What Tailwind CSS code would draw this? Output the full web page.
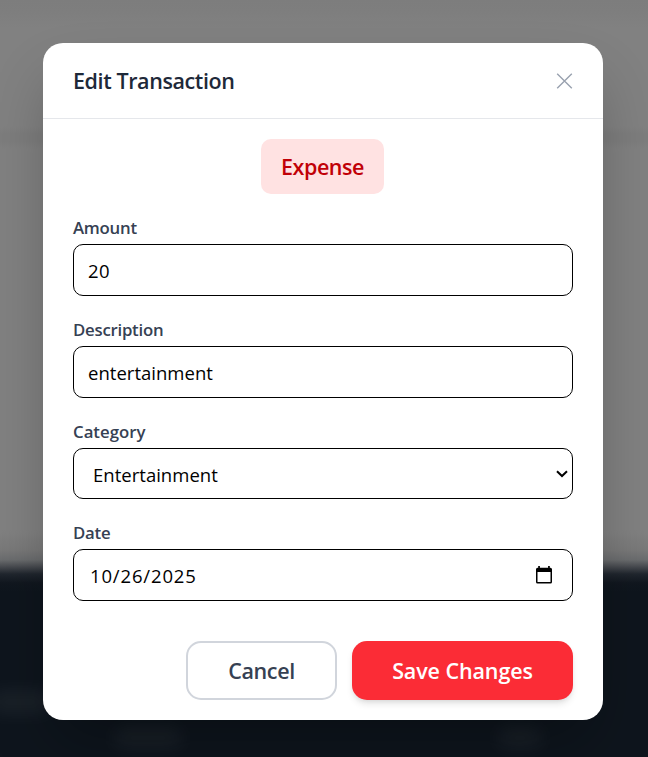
<!DOCTYPE html>
<html lang="en">
<head>
<meta charset="utf-8">
<title>Edit Transaction</title>
<script src="https://cdn.jsdelivr.net/npm/@tailwindcss/browser@4"></script>
</head>
<body class="relative h-[757px] w-[648px] overflow-hidden bg-[#818181] font-['Open_Sans','Noto_Sans',sans-serif]">
  <!-- Blurred page behind the dialog -->
  <div class="absolute inset-0 bg-[linear-gradient(to_bottom,#7d7d7d_0px,#7e7e7e_12px,#818181_28px,#818181_126px,#7d7d7d_133px,#7d7d7d_141px,#818181_150px,#818181_530px,#797979_550px,#6a6c6e_560px,#46494e_567px,#20262e_574px,#11171f_583px,#0e151d_592px,#0e151d_757px)]"></div>
  <div class="absolute top-[690px] -left-3 h-6 w-16 rounded-full bg-white/5 blur-[9px]"></div>
  <div class="absolute top-[728px] left-[113px] h-5 w-[70px] rounded-full bg-white/5 blur-[9px]"></div>
  <div class="absolute top-[728px] left-[497px] h-5 w-[46px] rounded-full bg-white/5 blur-[9px]"></div>

  <div class="relative flex h-full w-full items-start justify-center pt-[43px] pr-[2px]">
    <div role="dialog" class="flex h-[677px] w-[560px] flex-col rounded-[20px] bg-white shadow-[0_31px_62px_-12px_rgba(0,0,0,0.3)]">
      <header class="flex h-[76px] items-center justify-between border-b border-[#e5e7eb] px-[30px]">
        <h2 class="text-[21.5px] leading-[35px] font-semibold tracking-[-0.4px] whitespace-nowrap text-[#1e2939]">Edit Transaction</h2>
        <button aria-label="Close" class="flex h-[17px] w-[17px] items-center justify-center">
          <svg class="size-[17px]" viewBox="0 0 17 17" fill="none" stroke="#99a1af" stroke-width="1.4"><path d="M1.2 1.7 15.8 16.3M15.8 1.7 1.2 16.3"/></svg>
        </button>
      </header>

      <div class="flex flex-col gap-5 px-[30px] pt-5">
        <div class="flex justify-center pr-px">
          <span class="flex h-[55px] w-[123px] items-center justify-center rounded-[10px] bg-[#ffe2e2] pt-[2px] text-[21.5px] font-semibold tracking-[-0.45px] text-[#c10007]">Expense</span>
        </div>
        <div class="flex flex-col gap-[5px]">
          <span class="h-[25px] text-[16.8px] leading-[27px] font-semibold tracking-[-0.25px] text-[#364153]">Amount</span>
          <div class="flex h-[52px] items-center rounded-[10px] border border-black px-[14px] pt-[2px] text-[18.5px] text-black"><span class="tracking-[0.5px]">20</span></div>
        </div>
        <div class="flex flex-col gap-[5px]">
          <span class="h-[25px] text-[16.8px] leading-[27px] font-semibold tracking-[-0.25px] text-[#364153]">Description</span>
          <div class="flex h-[52px] items-center rounded-[10px] border border-black px-[14px] pt-[2px] text-[18.5px] text-black"><span class="tracking-[0.02px]">entertainment</span></div>
        </div>
        <div class="flex flex-col gap-[5px]">
          <span class="h-[25px] text-[16.8px] leading-[27px] font-semibold tracking-[0px] text-[#364153]">Category</span>
          <div class="flex h-[51px] items-center justify-between rounded-[10px] border border-black pr-[4px] pl-[19px] text-[18.5px] text-black"><span class="pt-[2px] tracking-[0.02px]">Entertainment</span>
            <svg class="h-[8px] w-[12px]" viewBox="0 0 12 8" fill="none" stroke="#000" stroke-width="2"><path d="M1 1.2 6 6 11 1.2"/></svg>
          </div>
        </div>
        <div class="flex flex-col gap-[5px]">
          <span class="h-[25px] text-[16.8px] leading-[27px] font-semibold tracking-[-0.25px] text-[#364153]">Date</span>
          <div class="flex h-[52px] items-center justify-between rounded-[10px] border border-black pr-[20px] pl-[16px] text-[18.5px] text-black"><span class="pt-[2px] tracking-[0.85px]">10/26/2025</span>
            <svg class="h-[18px] w-[16px]" viewBox="0 0 16 18"><path fill="#000" fill-rule="evenodd" d="M2.2 0h1.7v1.7h8.2V0h1.7v1.7h.6A1.6 1.6 0 0 1 16 3.3v12.6a1.6 1.6 0 0 1-1.6 1.6H1.6A1.6 1.6 0 0 1 0 15.9V3.3a1.6 1.6 0 0 1 1.6-1.6h.6ZM1.5 6v10h13V6Z"/></svg>
          </div>
        </div>
      </div>

      <footer class="mt-10 flex justify-end gap-[15px] px-[30px]">
        <button class="h-[59px] w-[151px] rounded-[15px] border-2 border-[#d1d5dc] pt-[2px] text-[21.5px] font-semibold tracking-[-0.35px] text-[#364153]">Cancel</button>
        <button class="h-[59px] w-[221px] rounded-[15px] bg-[#fb2c36] pt-[2px] text-[21.5px] font-semibold tracking-[-0.1px] whitespace-nowrap text-white shadow-[0_5px_7px_-1px_rgba(0,0,0,0.1),0_2px_5px_-2px_rgba(0,0,0,0.1)]">Save Changes</button>
      </footer>
    </div>
  </div>
</body>
</html>
